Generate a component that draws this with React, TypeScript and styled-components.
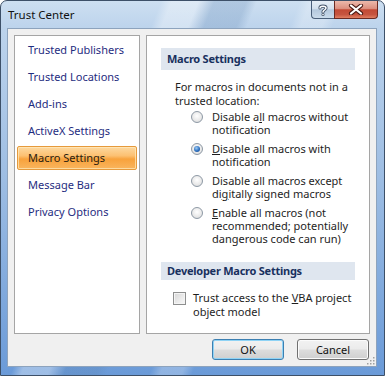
import React from "react";
import styled, { createGlobalStyle, css } from "styled-components";

const GlobalStyle = createGlobalStyle`
  html, body {
    margin: 0;
    padding: 0;
    background: #ffffff;
  }
  body {
    font-family: "Noto Sans", "Open Sans", sans-serif;
  }
  * {
    box-sizing: border-box;
  }
`;

const Window = styled.div`
  position: relative;
  width: 385px;
  height: 376px;
  display: flex;
  flex-direction: column;
  border: 1px solid #3d5068;
  border-radius: 7px 7px 0 0;
  overflow: hidden;
  background: linear-gradient(
      112deg,
      transparent 0 30%,
      rgba(255, 255, 255, 0.35) 32% 37%,
      rgba(90, 130, 175, 0.25) 40% 46%,
      transparent 48% 56%,
      rgba(255, 255, 255, 0.25) 58% 62%,
      transparent 64%
    ),
    linear-gradient(to bottom, #cddff1 0, #bcd3ec 28px, #9dbde3 180px, #6a9ad8 376px);
`;

const TitleBar = styled.div`
  height: 27px;
  display: flex;
  align-items: flex-start;
  padding-left: 7px;
`;

const Title = styled.div`
  font-size: 11.5px;
  line-height: 27px;
  color: #111;
`;

const Captions = styled.div`
  margin-left: auto;
  margin-right: 6px;
  display: flex;
`;

const CaptionButton = styled.div<{ $kind: "help" | "close" }>`
  height: 18px;
  display: flex;
  align-items: center;
  justify-content: center;
  border: 1px solid #4a5f7a;
  border-top: none;
  ${(p) =>
    p.$kind === "help"
      ? css`
          width: 23px;
          border-right: none;
          border-radius: 0 0 0 4px;
          background: linear-gradient(#e6eef6 0%, #d3e0ed 45%, #b4c8dd 52%, #cadbeb 100%);
        `
      : css`
          width: 44px;
          border-radius: 0 0 4px 0;
          border-color: #6b2a22;
          background: linear-gradient(#ecb9ab 0%, #dc9080 44%, #c34a35 52%, #c65540 80%, #e17f62 100%);
        `}
`;

const Body = styled.div`
  position: relative;
  flex: 1;
  margin: 0 7px 8px 6px;
  background: #f0f0f0;
  border: 1px solid #8da3bd;
  padding: 6px 6px 0 6px;
  display: flex;
  flex-direction: column;
`;

const Panels = styled.div`
  display: flex;
  gap: 6px;
  height: 299px;
`;

const Panel = styled.div<{ $width?: number }>`
  background: #ffffff;
  border: 1px solid #a5a5a5;
  min-width: 0;
  ${(p) => (p.$width ? `width: ${p.$width}px; flex: none;` : "flex: 1;")}
`;

const NavList = styled.div`
  display: flex;
  flex-direction: column;
  gap: 3px;
  padding: 2px 2px 0 2px;
`;

const NavItem = styled.div<{ $active?: boolean }>`
  height: 24px;
  line-height: 22px;
  padding-left: 10px;
  font-size: 11px;
  white-space: nowrap;
  color: #1f2d7f;
  border: 1px solid transparent;
  border-radius: 2px;
  ${(p) =>
    p.$active &&
    css`
      border-color: #e69a3c;
      color: #2a1d10;
      background: linear-gradient(#fdd9a0 0%, #fcc071 40%, #f8a23c 55%, #f9b55e 100%);
      box-shadow: inset 0 0 0 1px rgba(255, 235, 190, 0.7);
    `}
`;

const Content = styled.div`
  padding: 12px 14px 0 14px;
  font-size: 11px;
  color: #1e1e1e;
`;

const SectionHeader = styled.div<{ $height: number; $gap?: number }>`
  height: ${(p) => p.$height}px;
  line-height: ${(p) => p.$height}px;
  margin-top: ${(p) => p.$gap ?? 0}px;
  padding-left: 6px;
  background: #dfe6ef;
  font-weight: 700;
  color: #18305e;
  font-size: 11px;
  letter-spacing: -0.25px;
  white-space: nowrap;
`;

const Intro = styled.div`
  margin-top: 10px;
  padding-left: 14px;
  line-height: 14px;
  white-space: nowrap;
`;

const Options = styled.div`
  margin-top: 2px;
  padding-left: 30px;
  display: flex;
  flex-direction: column;
  gap: 6px;
`;

const Option = styled.div`
  display: flex;
  align-items: flex-start;
  line-height: 13px;
  white-space: nowrap;
`;

const Radio = styled.span<{ $checked?: boolean }>`
  position: relative;
  flex: none;
  width: 12px;
  height: 12px;
  margin: 1px 9px 0 0;
  border-radius: 50%;
  border: 1px solid #8e99a5;
  background: radial-gradient(circle at 50% 40%, #ffffff 0, #e8e8e8 60%, #cdd1d5 100%);
  ${(p) =>
    p.$checked &&
    css`
      &::after {
        content: "";
        position: absolute;
        inset: 2px;
        border-radius: 50%;
        background: radial-gradient(circle at 40% 35%, #9fcdf5 0, #2c6fbf 55%, #123f7e 100%);
      }
    `}
`;

const CheckRow = styled.div`
  margin-top: 11px;
  padding-left: 12px;
  display: flex;
  align-items: flex-start;
  line-height: 14px;
  white-space: nowrap;
`;

const Checkbox = styled.span`
  flex: none;
  width: 13px;
  height: 13px;
  margin: 1px 7px 0 0;
  border: 1px solid #8e8f8f;
  background: linear-gradient(135deg, #d6d6d6 0%, #ececec 60%, #f8f8f8 100%);
  box-shadow: inset 0 0 0 1px #f4f4f4;
`;

const ButtonRow = styled.div`
  margin-top: 5px;
  padding-right: 1px;
  display: flex;
  justify-content: flex-end;
  gap: 13px;
`;

const Button = styled.div<{ $default?: boolean }>`
  width: 72px;
  height: 21px;
  display: flex;
  align-items: center;
  justify-content: center;
  font-size: 11px;
  color: #111;
  border-radius: 3px;
  border: 1px solid ${(p) => (p.$default ? "#3c7fb1" : "#707070")};
  background: linear-gradient(#f2f2f2 0%, #ebebeb 48%, #dddddd 52%, #cfcfcf 100%);
  box-shadow: inset 0 0 0 1px ${(p) => (p.$default ? "#8fd3f5" : "#fbfbfb")};
`;

const Grip = styled.svg`
  position: absolute;
  right: 1px;
  bottom: 1px;
`;

const navItems = [
  "Trusted Publishers",
  "Trusted Locations",
  "Add-ins",
  "ActiveX Settings",
  "Macro Settings",
  "Message Bar",
  "Privacy Options",
];

export default function App() {
  return (
    <>
      <GlobalStyle />
      <Window>
        <TitleBar>
          <Title>Trust Center</Title>
          <Captions>
            <CaptionButton $kind="help">
              <svg width="10" height="12" viewBox="0 0 10 12">
                <path
                  d="M2 4 C2 1.5 8 1.5 8 4 C8 6 5 6 5 8"
                  fill="none"
                  stroke="#44546a"
                  strokeWidth="3.2"
                  strokeLinecap="round"
                />
                <path
                  d="M2 4 C2 1.5 8 1.5 8 4 C8 6 5 6 5 8"
                  fill="none"
                  stroke="#fff"
                  strokeWidth="1.5"
                  strokeLinecap="round"
                />
                <circle cx="5" cy="10.6" r="1.5" fill="#44546a" />
                <circle cx="5" cy="10.6" r="0.8" fill="#fff" />
              </svg>
            </CaptionButton>
            <CaptionButton $kind="close">
              <svg width="16" height="11" viewBox="0 0 16 11">
                <path d="M3 1.5 L13 9.5 M13 1.5 L3 9.5" stroke="#4a1a14" strokeWidth="4.2" strokeLinecap="round" />
                <path d="M3 1.5 L13 9.5 M13 1.5 L3 9.5" stroke="#fff" strokeWidth="2.2" strokeLinecap="round" />
              </svg>
            </CaptionButton>
          </Captions>
        </TitleBar>
        <Body>
          <Panels>
            <Panel $width={126}>
              <NavList>
                {navItems.map((item) => (
                  <NavItem key={item} $active={item === "Macro Settings"}>
                    {item}
                  </NavItem>
                ))}
              </NavList>
            </Panel>
            <Panel>
              <Content>
                <SectionHeader $height={22}>Macro Settings</SectionHeader>
                <Intro>
                  For macros in documents not in a
                  <br />
                  trusted location:
                </Intro>
                <Options>
                  <Option>
                    <Radio />
                    <span>
                      Disable a<u>l</u>l macros without
                      <br />
                      notification
                    </span>
                  </Option>
                  <Option>
                    <Radio $checked />
                    <span>
                      <u>D</u>isable all macros with
                      <br />
                      notification
                    </span>
                  </Option>
                  <Option>
                    <Radio />
                    <span>
                      Disable all macros except
                      <br />
                      di<u>g</u>itally signed macros
                    </span>
                  </Option>
                  <Option>
                    <Radio />
                    <span>
                      <u>E</u>nable all macros (not
                      <br />
                      recommended; potentially
                      <br />
                      dangerous code can run)
                    </span>
                  </Option>
                </Options>
                <SectionHeader $height={18} $gap={17}>
                  Developer Macro Settings
                </SectionHeader>
                <CheckRow>
                  <Checkbox />
                  <span>
                    Trust access to the <u>V</u>BA project
                    <br />
                    object model
                  </span>
                </CheckRow>
              </Content>
            </Panel>
          </Panels>
          <ButtonRow>
            <Button $default>OK</Button>
            <Button>Cancel</Button>
          </ButtonRow>
          <Grip width="10" height="10" viewBox="0 0 10 10">
            {[
              [8, 2],
              [8, 5],
              [5, 5],
              [8, 8],
              [5, 8],
              [2, 8],
            ].map(([x, y]) => (
              <rect key={`${x}-${y}`} x={x} y={y} width="1.5" height="1.5" fill="#a0a0a0" />
            ))}
          </Grip>
        </Body>
      </Window>
    </>
  );
}
